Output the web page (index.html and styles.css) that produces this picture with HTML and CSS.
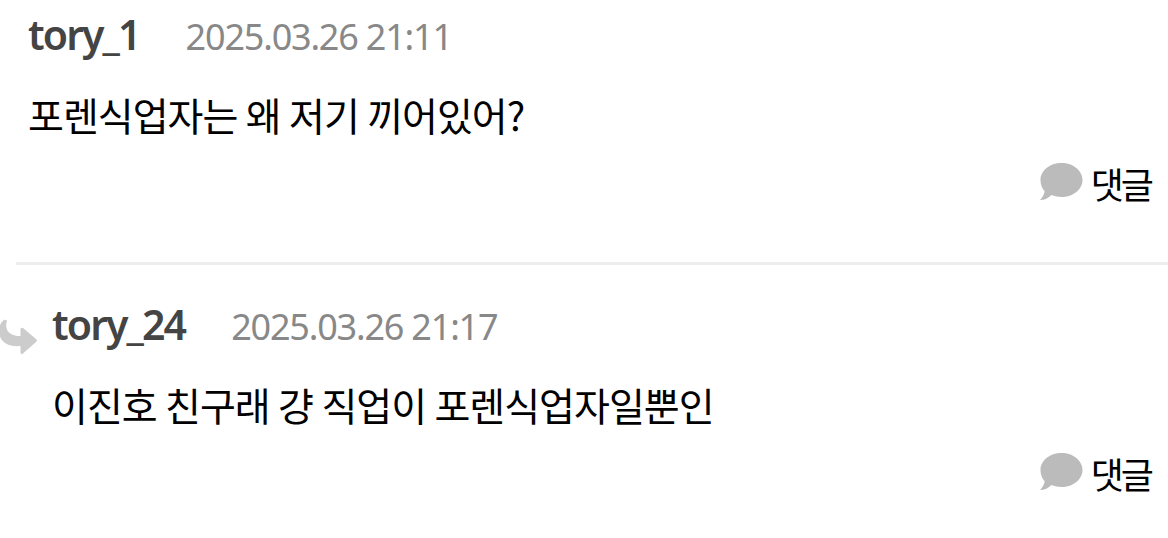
FILE: index.html
```html
<!DOCTYPE html>
<html lang="ko">
<head>
<meta charset="UTF-8" />
<meta name="viewport" content="width=device-width, initial-scale=1" />
<title>댓글</title>
<link rel="stylesheet" href="styles.css">
</head>
<body>

<ul class="comment-list">
  <li class="comment">
    <div class="meta"><span class="author">tory_1</span><span class="date">2025.03.26 21:11</span></div>
    <p class="text">포렌식업자는 왜 저기 끼어있어?</p>
    <div class="actions">
      <a class="reply-btn" href="#">
        <svg class="bubble" viewBox="0 0 43 38"><path d="M21.500 0C33.400 0 42.500 7.600 42.500 17S33.400 34 21.500 34C18 34 14.500 33.300 11.500 32C8.500 35 4.500 37 0 37C2.500 34.500 4.300 31.500 4.700 28.300C2 25.300 .500 21.500 .500 17C.500 7.600 9.600 0 21.500 0Z"/></svg>
        <span class="reply-label">댓글</span>
      </a>
    </div>
  </li>
  <li class="comment reply">
    <svg class="arrow" viewBox="0 0 38 36"><path d="M6 1Q7.500 1.500 6.500 3.500C5 11 9 17 20.500 17V10Q21 8 23 9L36 20Q38 21.500 36 23L23 34.500Q21 36 20.500 33.500V27C7 28 0 23 -1 13C-1 7 1 2.500 4.500 .800Q5.300 .500 6 1Z"/></svg>
    <div class="meta"><span class="author">tory_24</span><span class="date">2025.03.26 21:17</span></div>
    <p class="text">이진호 친구래 걍 직업이 포렌식업자일뿐인</p>
    <div class="actions">
      <a class="reply-btn" href="#">
        <svg class="bubble" viewBox="0 0 43 38"><path d="M21.500 0C33.400 0 42.500 7.600 42.500 17S33.400 34 21.500 34C18 34 14.500 33.300 11.500 32C8.500 35 4.500 37 0 37C2.500 34.500 4.300 31.500 4.700 28.300C2 25.300 .500 21.500 .500 17C.500 7.600 9.600 0 21.500 0Z"/></svg>
        <span class="reply-label">댓글</span>
      </a>
    </div>
  </li>
</ul>

</body>
</html>
```
FILE: styles.css
```css
body {
  margin: 0;
  background: #fff;
  color: #000;
  font-family: "Noto Sans", "Noto Sans CJK KR", sans-serif;
  overflow: hidden;
}
.comment-list {
  list-style: none;
  margin: 0;
  padding: 0 0 0 16px;
}
.comment {
  position: relative;
  height: 262px;
  padding: 0 16px 0 12px;
  border-bottom: 3px solid #eee;
}
.reply {
  padding: 25px 16px 0 36px;
  border-bottom: none;
}
.meta {
  display: flex;
  align-items: center;
  height: 72px;
  white-space: nowrap;
}
.author {
  padding-bottom: 5px;
  color: #444;
  font-size: 41px;
  font-weight: 600;
  letter-spacing: -1.9px;
}
.date {
  margin-left: 46px;
  color: #888;
  font-size: 36px;
  letter-spacing: -1.2px;
}
.text {
  margin: 0;
  height: 88px;
  line-height: 84px;
  font-family: "Noto Sans CJK KR", sans-serif;
  font-size: 39px;
  letter-spacing: -1px;
  word-spacing: -1.5px;
  white-space: nowrap;
}
.actions {
  display: flex;
  justify-content: flex-end;
}
.reply-btn {
  display: flex;
  gap: 8px;
  color: #000;
  text-decoration: none;
}
.bubble {
  width: 43px;
  height: 38px;
  margin-top: 3px;
  fill: #bbb;
}
.reply-label {
  height: 50px;
  padding-right: 1px;
  line-height: 46px;
  font-family: "Noto Sans CJK KR", sans-serif;
  font-size: 36px;
  letter-spacing: -3px;
}
.arrow {
  position: absolute;
  left: -16px;
  top: 54px;
  width: 38px;
  height: 36px;
  fill: #ccc;
}
```
